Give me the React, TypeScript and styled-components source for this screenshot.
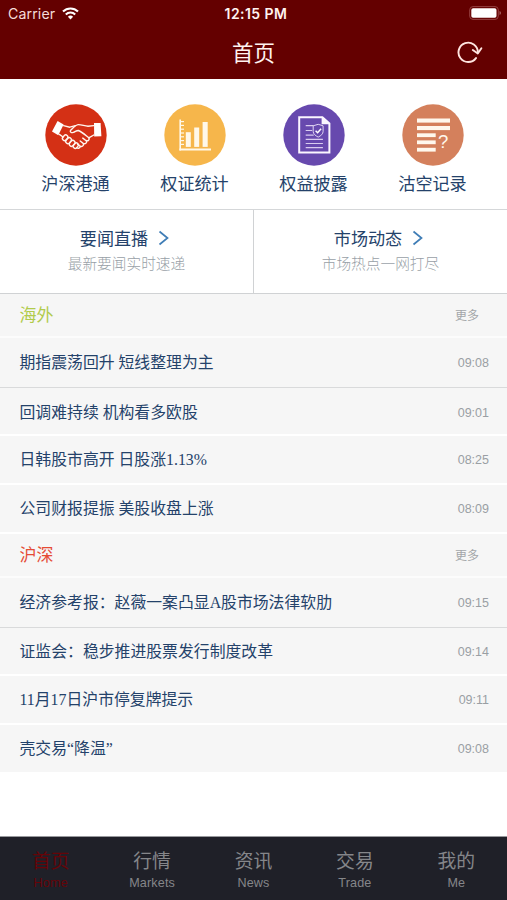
import React from "react";
import styled, { createGlobalStyle } from "styled-components";

const GlobalStyle = createGlobalStyle`
  * { box-sizing: border-box; }
  body { margin: 0; background: #fff; }
`;

const sans = `"Liberation Sans", "Noto Sans CJK SC", sans-serif`;
const cjk = `"Noto Sans CJK SC", sans-serif`;

const Screen = styled.div`
  width: 507px;
  height: 900px;
  display: flex;
  flex-direction: column;
  background: #fff;
  font-family: ${sans};
  color: #24426a;
  overflow: hidden;
`;

const Header = styled.header`
  height: 79px;
  flex: none;
  background: #640000;
  color: #fff3f0;
`;

const StatusBar = styled.div`
  height: 26px;
  display: grid;
  grid-template-columns: 1fr auto 1fr;
  align-items: center;
  padding: 0 5px 0 8px;
  font-family: Inter, sans-serif;
`;

const Carrier = styled.div`
  display: flex;
  align-items: center;
  gap: 7px;
  font-size: 14.2px;
  letter-spacing: 0.1px;
  color: #f5dcd9;
`;

const Clock = styled.div`
  font-size: 14px;
  font-weight: 600;
  letter-spacing: 0.45px;
  padding-left: 2px;
`;

const Battery = styled.div`
  display: flex;
  justify-content: flex-end;
`;

const NavBar = styled.div`
  height: 52px;
  display: grid;
  grid-template-columns: 1fr auto 1fr;
  align-items: center;
  padding: 0 24px 0 24px;
`;

const NavTitle = styled.h1`
  grid-column: 2;
  margin: 0;
  font: 400 21.5px/32px ${cjk};
`;

const RefreshButton = styled.button`
  justify-self: end;
  display: flex;
  padding: 0;
  border: 0;
  background: none;
  color: #ffe5e0;
`;

const Shortcuts = styled.section`
  height: 130px;
  flex: none;
  display: grid;
  grid-template-columns: repeat(4, 119px);
  justify-content: center;
  padding: 25px 0 0 1px;
`;

const Shortcut = styled.div`
  display: flex;
  flex-direction: column;
  align-items: center;
  gap: 5px;
`;

const ShortcutLabel = styled.span`
  font: 400 17.1px/24px ${cjk};
`;

const Feeds = styled.section`
  display: grid;
  grid-template-columns: 254px 253px;
  height: 85px;
  flex: none;
  border-top: 1px solid #d5d7d9;
  border-bottom: 1px solid #d0d2d4;
`;

const Feed = styled.div<{ $divided?: boolean }>`
  display: flex;
  flex-direction: column;
  align-items: center;
  padding-top: 15px;
  border-right: ${(p) => (p.$divided ? "1px solid #d0d2d4" : "0")};
`;

const FeedTitle = styled.div`
  display: flex;
  align-items: center;
  gap: 10px;
  margin-right: 3px;
  font: 400 17.1px/25px ${cjk};
`;

const FeedCaption = styled.div`
  margin-top: 1px;
  font: 300 14.7px/24px ${cjk};
  color: #989fa7;
`;

const SectionHead = styled.div<{ $height: number }>`
  height: ${(p) => p.$height}px;
  flex: none;
  display: flex;
  align-items: center;
  justify-content: space-between;
  padding: 0 28px 0 19.5px;
  background: #f6f6f6;
  border-bottom: 2px solid #fcfcfc;
`;

const SectionName = styled.h2<{ $color: string }>`
  margin: 0 0 2px;
  font: 400 17px/24px ${cjk};
  color: ${(p) => p.$color};
`;

const More = styled.span`
  font: 400 12px/18px ${cjk};
  color: #a3a6a9;
`;

const NewsRow = styled.div<{ $height: number; $rule?: "gray" | "white" | "none"; $drop?: number }>`
  height: ${(p) => p.$height}px;
  flex: none;
  display: flex;
  align-items: center;
  justify-content: space-between;
  padding: ${(p) => p.$drop ?? 0}px 18px 0 19.5px;
  background: #f6f6f6;
  border-bottom: ${(p) =>
    p.$rule === "gray" ? "1px solid #d9dadb" : p.$rule === "none" ? "0" : "2px solid #fff"};
`;

const Headline = styled.span`
  font: 400 15.85px/24px "Liberation Serif", "Noto Sans CJK SC", serif;
  white-space: nowrap;
`;

const Time = styled.time`
  font-size: 12.5px;
  color: #9a9fa4;
`;

const TabBar = styled.nav`
  margin-top: auto;
  height: 64px;
  flex: none;
  display: grid;
  grid-template-columns: repeat(5, 1fr);
  background: #1f2028;
  border-top: 1px solid #98999d;
`;

const Tab = styled.div<{ $active?: boolean }>`
  display: flex;
  flex-direction: column;
  align-items: center;
  padding-top: 9px;
  color: ${(p) => (p.$active ? "#650408" : "#85868a")};
`;

const TabName = styled.span`
  font: 400 18.8px/28px ${cjk};
`;

const TabSub = styled.span`
  margin-top: 2px;
  font-size: 12.6px;
  line-height: 15px;
  letter-spacing: 0.15px;
`;

const WifiIcon = () => (
  <svg width="17" height="13" viewBox="0 0 17 13" fill="none" stroke="#fff" strokeWidth="2.1">
    <path d="M1 4.6a10.7 10.7 0 0 1 15 0" />
    <path d="M3.8 7.5a6.7 6.7 0 0 1 9.4 0" />
    <path d="M8.5 12.4 5.9 9.7a3.8 3.8 0 0 1 5.2 0z" fill="#fff" stroke="none" />
  </svg>
);

const BatteryIcon = () => (
  <svg width="33" height="14" viewBox="0 0 33 14">
    <rect x=".7" y=".6" width="28.6" height="12.8" rx="3.3" fill="none" stroke="#954040" />
    <rect x="2.3" y="2.2" width="25.2" height="9.6" rx="1.8" fill="#fff" />
    <path d="M30.6 5c1.6.7 1.6 3.3 0 4z" fill="#b57777" />
  </svg>
);

const RefreshIcon = () => (
  <svg width="26" height="24" viewBox="0 0 26 24" fill="none" stroke="currentColor" strokeWidth="1.9" strokeLinecap="round" strokeLinejoin="round">
    <path d="M19 18.1A9.7 9.7 0 1 1 20.9 12.2" />
    <path d="m15.8 10 5 3.5 3.6-5.2" />
  </svg>
);

const Chevron = () => (
  <svg width="12" height="16" viewBox="0 0 12 16" fill="none" stroke="#3f7db6" strokeWidth="1.7">
    <path d="m1.5 1.5 8 6.5-8 6.5" />
  </svg>
);

const Disc = ({ color, children }: { color: string; children: React.ReactNode }) => (
  <svg width="62" height="62" viewBox="0 0 62 62">
    <circle cx="31" cy="31" r="30.7" fill={color} />
    {children}
  </svg>
);

const HandshakeIcon = () => (
  <Disc color="#d43015">
    <g fill="none" stroke="#fff5ee" strokeWidth="1.4" strokeLinecap="round" strokeLinejoin="round">
      <path d="m12.6 17 6 3.6-5.3 10.6-6.3-3.8z" fill="#fff" stroke="none" />
      <path d="M49 19h6.6l.8 13.2-7.2.3z" fill="#fff" stroke="none" />
      <path d="m18.6 21.6 6.2 1.6 5.6-1.6" />
      <path d="M48.6 21.6 43 22.3c-3.6-.2-6.4-1.8-9.8-1.7-2.8.4-5 3.2-7.6 5.6-1 1.9.7 2.9 2.8 2.2 2-.6 3-2 5-1.9 3.7 1.6 7 4.6 10.4 7.2" />
      <path d="m14.4 30.4 3.6 2.6M48.8 31l-4.6 2.6" />
      <path d="M43.8 33.7c1.2 1.8-.7 3.8-3 2.8l-3-2.4M41.4 36.8c.9 2-1.2 3.6-3.2 2.6l-3-2.4M38.4 39.8c.6 1.9-1.4 3.2-3.2 2.3l-2.6-2M35.2 42.4c-.2 1.7-2 2.2-3.4 1.4" />
      <rect x="17.2" y="31.6" width="6" height="4.3" rx="2.15" transform="rotate(-48 20.2 33.8)" />
      <rect x="20.4" y="34.5" width="6.4" height="4.3" rx="2.15" transform="rotate(-48 23.6 36.7)" />
      <rect x="24" y="37.2" width="6.4" height="4.3" rx="2.15" transform="rotate(-48 27.2 39.4)" />
      <rect x="27.9" y="39.6" width="5.8" height="4.1" rx="2.05" transform="rotate(-48 30.8 41.7)" />
    </g>
  </Disc>
);

const ChartIcon = () => (
  <Disc color="#f6b64b">
    <g fill="#fff8e9">
      <rect x="15.4" y="15.5" width="1.6" height="31" />
      <rect x="15.4" y="44.5" width="31.6" height="2" />
      {[17, 20.8, 24.6, 28.4, 32.2, 36, 39.8].map((y) => (
        <rect key={y} x="16" y={y} width="4" height="1.2" />
      ))}
      <rect x="21.8" y="28.2" width="5" height="14.7" />
      <rect x="30.2" y="23.5" width="5" height="19.4" />
      <rect x="38.6" y="18" width="5.1" height="24.9" />
    </g>
  </Disc>
);

const DocumentIcon = () => (
  <Disc color="#6749ae">
    <path d="M16.2 13.2h23.2l7 6.3v29.1H16.2z" fill="none" stroke="#fbf6ff" strokeWidth="2" />
    <path d="M38.6 12.6v7.7h8.3z" fill="#fbf6ff" />
    <path d="M22.7 21.6h8M22.7 26.5h6.5M22.7 31.2h8M22.7 35.3h17.2M22.7 39.5h17.2M22.7 43.6h17.2" stroke="#d9ccef" strokeWidth="1.2" />
    <path d="m35.2 20.3 4.9 1.5v5.7c0 2.4-2.1 4.2-4.9 5.6-2.8-1.4-5-3.2-5-5.6v-5.7z" fill="#6749ae" stroke="#e0d5f3" strokeWidth="1" />
    <path d="m32.6 26.7 2 2 3.5-4" fill="none" stroke="#fff" strokeWidth="1.5" />
  </Disc>
);

const Question = styled.text`
  font: 400 18.5px "Liberation Sans", sans-serif;
`;

const RecordIcon = () => (
  <Disc color="#d4805c">
    <g fill="#fff8ed">
      <rect x="15" y="14.5" width="33" height="4.1" />
      <rect x="15" y="22" width="33" height="4.1" />
      <rect x="15" y="29.3" width="18.7" height="3.8" />
      <rect x="15" y="36.4" width="18.7" height="3.8" />
      <rect x="15" y="43.8" width="18.7" height="3.8" />
      <Question x="36" y="43.6">?</Question>
    </g>
  </Disc>
);

const shortcuts = [
  { label: "沪深港通", icon: <HandshakeIcon /> },
  { label: "权证统计", icon: <ChartIcon /> },
  { label: "权益披露", icon: <DocumentIcon /> },
  { label: "沽空记录", icon: <RecordIcon /> },
];

type Row = {
  title: string;
  time: string;
  height: number;
  rule?: "gray" | "white" | "none";
  drop?: number;
};

const sections: { name: string; color: string; height: number; rows: Row[] }[] = [
  {
    name: "海外",
    color: "#b1cb4b",
    height: 44,
    rows: [
      { title: "期指震荡回升 短线整理为主", time: "09:08", height: 50, rule: "gray" },
      { title: "回调难持续 机构看多欧股", time: "09:01", height: 48, drop: 3 },
      { title: "日韩股市高开 日股涨1.13%", time: "08:25", height: 49, drop: 1 },
      { title: "公司财报提振 美股收盘上涨", time: "08:09", height: 49 },
    ],
  },
  {
    name: "沪深",
    color: "#e54b35",
    height: 44,
    rows: [
      { title: "经济参考报：赵薇一案凸显A股市场法律软肋", time: "09:15", height: 50, rule: "gray" },
      { title: "证监会：稳步推进股票发行制度改革", time: "09:14", height: 48, drop: 2 },
      { title: "11月17日沪市停复牌提示", time: "09:11", height: 49 },
      { title: "壳交易“降温”", time: "09:08", height: 47, rule: "none" },
    ],
  },
];

const tabs = [
  ["首页", "Home"],
  ["行情", "Markets"],
  ["资讯", "News"],
  ["交易", "Trade"],
  ["我的", "Me"],
];

export default function App() {
  return (
    <Screen>
      <GlobalStyle />
      <Header>
        <StatusBar>
          <Carrier>Carrier <WifiIcon /></Carrier>
          <Clock>12:15 PM</Clock>
          <Battery><BatteryIcon /></Battery>
        </StatusBar>
        <NavBar>
          <NavTitle>首页</NavTitle>
          <RefreshButton aria-label="刷新"><RefreshIcon /></RefreshButton>
        </NavBar>
      </Header>
      <Shortcuts>
        {shortcuts.map((s) => (
          <Shortcut key={s.label}>
            {s.icon}
            <ShortcutLabel>{s.label}</ShortcutLabel>
          </Shortcut>
        ))}
      </Shortcuts>
      <Feeds>
        <Feed $divided>
          <FeedTitle>要闻直播 <Chevron /></FeedTitle>
          <FeedCaption>最新要闻实时速递</FeedCaption>
        </Feed>
        <Feed>
          <FeedTitle>市场动态 <Chevron /></FeedTitle>
          <FeedCaption>市场热点一网打尽</FeedCaption>
        </Feed>
      </Feeds>
      {sections.map((s) => (
        <React.Fragment key={s.name}>
          <SectionHead $height={s.height}>
            <SectionName $color={s.color}>{s.name}</SectionName>
            <More>更多</More>
          </SectionHead>
          {s.rows.map((r) => (
            <NewsRow key={r.title} $height={r.height} $rule={r.rule} $drop={r.drop}>
              <Headline>{r.title}</Headline>
              <Time>{r.time}</Time>
            </NewsRow>
          ))}
        </React.Fragment>
      ))}
      <TabBar>
        {tabs.map(([name, sub], i) => (
          <Tab key={sub} $active={i === 0}>
            <TabName>{name}</TabName>
            <TabSub>{sub}</TabSub>
          </Tab>
        ))}
      </TabBar>
    </Screen>
  );
}
